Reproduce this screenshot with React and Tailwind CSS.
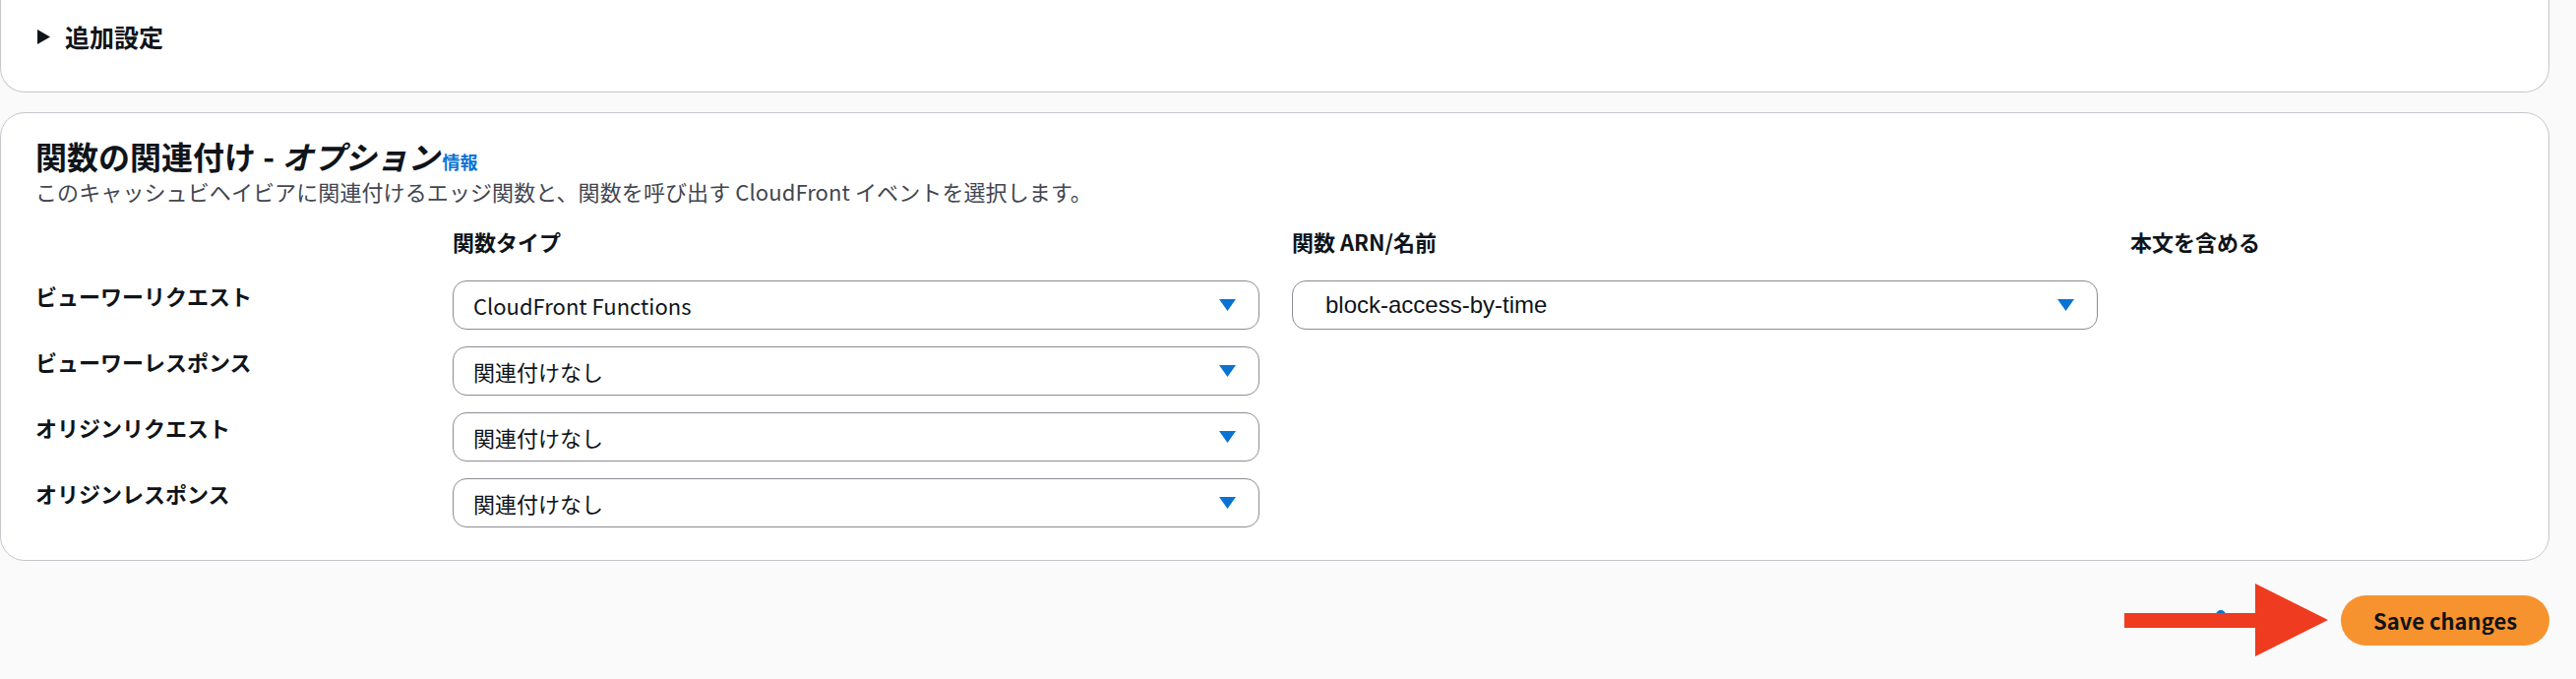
function Caret() {
  return (
    <svg width="17" height="12" viewBox="0 0 17 12" className="shrink-0">
      <path d="M0 0h17L8.5 12z" fill="#0972d3" />
    </svg>
  )
}

function Select({ value, arn }) {
  return (
    <div className={`flex h-[50px] items-center justify-between rounded-[14px] border border-[#8c8c94] bg-white pr-[23px] ${arn ? "pl-[33px]" : "pl-[20px]"}`}>
      {arn ? (
        <span className="font-['Liberation_Sans',Arial,sans-serif] text-[24px] leading-[30px] text-[#0f141a]">{value}</span>
      ) : (
        <span className="text-[22px] leading-[30px] text-[#0f141a]">{value}</span>
      )}
      <Caret />
    </div>
  )
}

const rows = [
  { label: "ビューワーリクエスト", type: "CloudFront Functions", arn: "block-access-by-time" },
  { label: "ビューワーレスポンス", type: "関連付けなし" },
  { label: "オリジンリクエスト", type: "関連付けなし" },
  { label: "オリジンレスポンス", type: "関連付けなし" },
]

export default function App() {
  return (
    <div className="min-h-screen bg-[#fafafa] pr-[27px] font-['Noto_Sans_CJK_JP','Noto_Sans',sans-serif] text-[#0f141a]">
      {/* additional settings (top clipped) */}
      <div className="rounded-b-[25px] border-x border-b border-[#c6c6cd] bg-white pl-[37px] pt-[20px] pb-[38px]">
        <div className="flex items-center gap-[15px]">
          <svg width="13" height="15" viewBox="0 0 13 15">
            <path d="M0 0l13 7.5L0 15z" fill="#0f141a" />
          </svg>
          <span className="text-[25px] font-bold leading-[35px]">追加設定</span>
        </div>
      </div>

      {/* function associations */}
      <div className="mt-[20px] rounded-[25px] border border-[#c6c6cd] bg-white px-[35px] pt-[23px] pb-[33px]">
        <h2 className="h-[40px] text-[32px] font-bold leading-[40px]">
          関数の関連付け - <span className="italic">オプション</span>
          <a className="ml-[3px] text-[18px] font-bold leading-none text-[#0972d3]">情報</a>
        </h2>
        <p className="mt-[1px] text-[22px] leading-[30px] tracking-[0.1px] text-[#424650]">
          このキャッシュビヘイビアに関連付けるエッジ関数と、関数を呼び出す CloudFront イベントを選択します。
        </p>

        <div className="mt-[21px] grid grid-cols-[391px_820px_819px_1fr] gap-x-[33px] gap-y-[17px]">
          <div />
          <div className="mb-[8px] text-[22px] font-bold leading-[30px]">関数タイプ</div>
          <div className="mb-[8px] text-[22px] font-bold leading-[30px]">関数 ARN/名前</div>
          <div className="mb-[8px] text-[22px] font-bold leading-[30px]">本文を含める</div>

          {rows.map((r) => (
            <div key={r.label} className="contents">
              <div className="text-[22px] font-bold leading-[30px]">{r.label}</div>
              <Select value={r.type} />
              {r.arn ? <Select value={r.arn} arn /> : <div />}
              <div />
            </div>
          ))}
        </div>
      </div>

      {/* footer actions */}
      <div className="flex items-center justify-end gap-[13px] pt-[23px] pb-[30px]">
        <svg width="207" height="74" viewBox="0 0 207 74">
          <circle cx="98" cy="32" r="5" fill="#0972d3" />
          <rect x="0" y="30" width="134" height="15" fill="#ef3b1f" />
          <path d="M133 0L207 37L133 74z" fill="#ef3b1f" />
        </svg>
        <button className="flex h-[51px] w-[212px] items-center justify-center rounded-full bg-[#f7932f] text-[22px] font-bold text-[#0f141a]">
          Save changes
        </button>
      </div>
    </div>
  )
}
